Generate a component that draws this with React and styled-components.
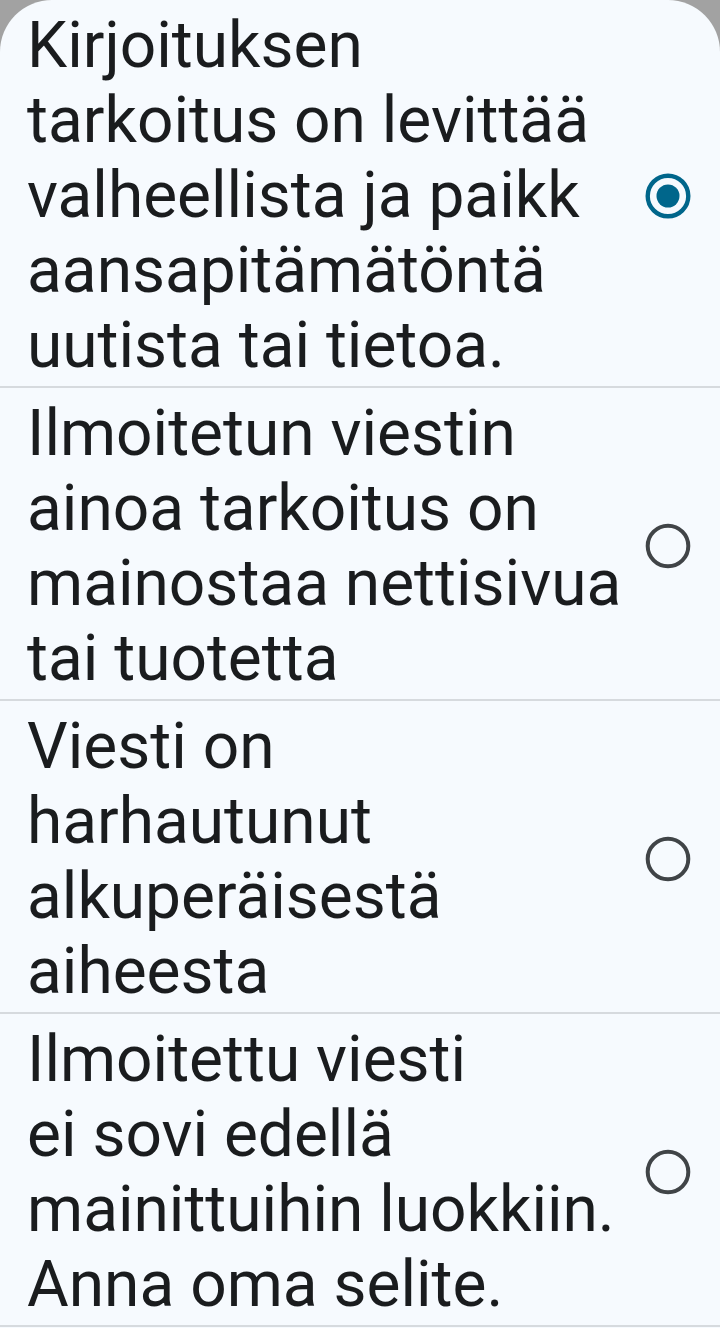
import React, { useState } from 'react';
import styled, { createGlobalStyle } from 'styled-components';

const GlobalStyle = createGlobalStyle`
    html, body {
        margin: 0;
        padding: 0;
        background: #a2a2a2;
    }
    #root {
        min-height: 1328px;
    }
`

const reasons = [
    'Kirjoituksen\ntarkoitus on levittää\nvalheellista ja paikk\naansapitämätöntä\nuutista tai tietoa.',
    'Ilmoitetun viestin\nainoa tarkoitus on\nmainostaa nettisivua\ntai tuotetta',
    'Viesti on\nharhautunut\nalkuperäisestä\naiheesta',
    'Ilmoitettu viesti\nei sovi edellä\nmainittuihin luokkiin.\nAnna oma selite.',
]

const Radio = ({ checked }) => (
    <RadioBox>
        <svg width="48" height="48" viewBox="0 0 48 48">
            <circle
                cx="24"
                cy="24"
                r="20.3"
                fill="none"
                stroke={checked ? '#00668b' : '#404447'}
                strokeWidth={checked ? 4.4 : 4}
            />
            {checked && <circle cx="24" cy="24" r="11.5" fill="#00668b" />}
        </svg>
    </RadioBox>
)

const App = () => {
    const [selected, setSelected] = useState(0)

    return (
        <>
            <GlobalStyle />
            <Sheet role="radiogroup">
                {reasons.map((text, i) => (
                    <Option
                        key={i}
                        role="radio"
                        aria-checked={selected === i}
                        onClick={() => setSelected(i)}
                    >
                        <Label>{text}</Label>
                        <Radio checked={selected === i} />
                    </Option>
                ))}
            </Sheet>
        </>
    )
}

export default App

const Sheet = styled.div`
    background: #f6fafe;
    border-radius: 52px 52px 0 0;
    min-height: 1328px;
    display: flex;
    flex-direction: column;
`

const Option = styled.div`
    display: flex;
    align-items: center;
    gap: 16px;
    padding: 8px 28px 3px 27px;
    border-bottom: 2px solid #d6dade;
    cursor: pointer;
`

const Label = styled.div`
    flex: 1;
    font-family: Roboto, "Noto Sans", sans-serif;
    font-size: 64px;
    line-height: 75px;
    color: #1a1c1e;
    white-space: pre-line;
`

const RadioBox = styled.div`
    width: 48px;
    height: 48px;
    flex-shrink: 0;
    svg {
        display: block;
    }
`
